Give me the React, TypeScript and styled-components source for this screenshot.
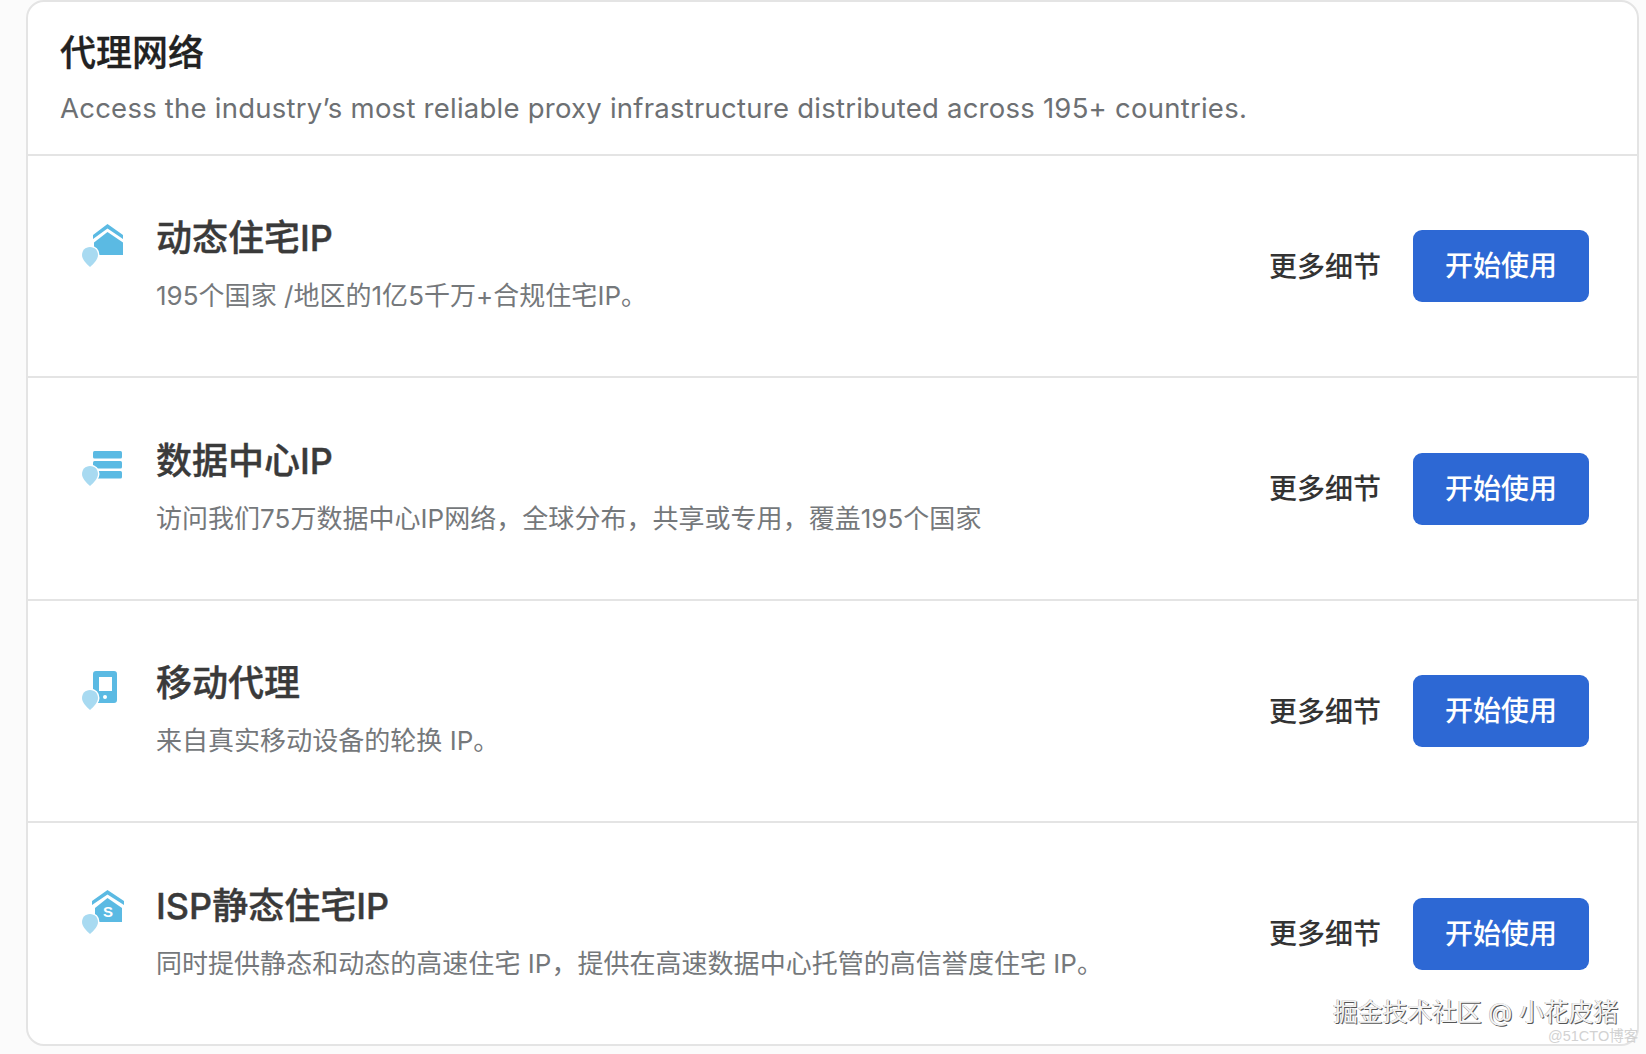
import React from "react";
import styled, { createGlobalStyle } from "styled-components";

const CJK = `Inter, "Noto Sans CJK SC", "Noto Sans", sans-serif`;

const Global = createGlobalStyle`
  html, body { margin: 0; padding: 0; background: #fbfbfb; }
  body { width: 1646px; height: 1054px; overflow: hidden; font-family: ${CJK}; }
`;

const Page = styled.div`
  position: relative;
  width: 1646px;
  height: 1054px;
  padding: 0 7px 8px 26px;
  box-sizing: border-box;
`;

const Card = styled.section`
  height: 100%;
  box-sizing: border-box;
  background: #fff;
  border: 2px solid #e4e4e4;
  border-radius: 18px;
  display: flex;
  flex-direction: column;
`;

const Header = styled.header`
  height: 154px;
  flex: none;
  box-sizing: border-box;
  padding: 26px 32px 0;
  border-bottom: 2px solid #e4e4e4;
`;

const Heading = styled.h1`
  margin: 0;
  font-size: 36px;
  line-height: 50px;
  font-weight: 500;
  color: #222;
  -webkit-text-stroke: 0.3px #222;
`;

const Lead = styled.p`
  margin: 10px 0 0;
  font-size: 27.5px;
  line-height: 40px;
  letter-spacing: 0.24px;
  color: #6d7073;
`;

const Row = styled.article<{ $h: number; $last?: boolean }>`
  height: ${(p) => p.$h}px;
  flex: none;
  box-sizing: border-box;
  display: flex;
  align-items: center;
  padding: 0 48px 0 32px;
  border-bottom: ${(p) => (p.$last ? "none" : "2px solid #e4e4e4")};
`;

const IconBox = styled.svg<{ $top: number }>`
  width: 90px;
  height: 90px;
  flex: none;
  align-self: flex-start;
  margin: ${(p) => p.$top}px 6px 0 0;
`;

const Body = styled.div`
  flex: 1;
  min-width: 0;
  margin-top: -5px;
`;

const Title = styled.h2`
  margin: 0;
  font-size: 36px;
  line-height: 50px;
  font-weight: 500;
  color: #3a3a3a;
  -webkit-text-stroke: 0.4px #3a3a3a;
`;

const Desc = styled.p`
  margin: 15px 0 0;
  font-size: 26px;
  line-height: 36px;
  letter-spacing: 0.03px;
  color: #75787b;
`;

const More = styled.span`
  font-size: 28px;
  font-weight: 500;
  color: #333;
  margin: 0 32px 3px 0;
`;

const Action = styled.button`
  width: 176px;
  height: 72px;
  border: none;
  border-radius: 9px;
  background: #2d68d4;
  color: #fff;
  font-family: ${CJK};
  font-size: 28px;
  font-weight: 500;
  padding: 0 0 4px;
`;

const Juejin = styled.div`
  position: absolute;
  left: 1333px;
  top: 994px;
  font-size: 25px;
  line-height: 36px;
  letter-spacing: -0.25px;
  white-space: nowrap;
  color: #f4f4f4;
  text-shadow: 1px 1px 0 #555, -0.5px -0.5px 0 #aaa;
`;

const Cto = styled.div`
  position: absolute;
  left: 1548px;
  top: 1027px;
  font-family: "Liberation Sans", "Noto Sans CJK SC", sans-serif;
  font-size: 14.5px;
  line-height: 18px;
  white-space: nowrap;
  color: #d2d2d2;
`;

const PinMark = styled.path`
  fill: #a8daf1;
  stroke: #fff;
  stroke-width: 3;
  paint-order: stroke;
`;

const ShopLetter = styled.text`
  fill: #fff;
  font-family: "Liberation Sans", sans-serif;
  font-size: 15px;
  font-weight: 700;
`;

const blue = "#5bbae3";

const Pin = ({ y }: { y: number }) => (
  <PinMark
    transform={`translate(30 ${y})`}
    d="M0 0c4.800 0 8 3.600 8 8 0 4.500-4.500 8.800-8 12-3.500-3.200-8-7.500-8-12C-8 3.600-4.800 0 0 0z"
  />
);

type IconProps = { top: number };

const HomeIcon = ({ top }: IconProps) => (
  <IconBox $top={top} viewBox="0 0 90 90">
    <path d="M47.500 24 63 35v4L47.500 28.500 33 39v-4z" fill={blue} />
    <path d="M47.500 32 63 42.500V55H34V42.500z" fill={blue} />
    <Pin y={47} />
  </IconBox>
);

const StackIcon = ({ top }: IconProps) => (
  <IconBox $top={top} viewBox="0 0 90 90">
    <rect x="33" y="26" width="29" height="7.500" rx="1.500" fill={blue} />
    <rect x="33" y="36" width="29" height="7.500" rx="1.500" fill={blue} />
    <rect x="33" y="46" width="29" height="7.500" rx="1.500" fill={blue} />
    <Pin y={41} />
  </IconBox>
);

const PhoneIcon = ({ top }: IconProps) => (
  <IconBox $top={top} viewBox="0 0 90 90">
    <path
      fillRule="evenodd"
      d="M36 21h18a3 3 0 0 1 3 3v26a3 3 0 0 1-3 3H36a3 3 0 0 1-3-3V24a3 3 0 0 1 3-3zM39 27v14h13V27z"
      fill={blue}
    />
    <circle cx="45" cy="47" r="2" fill="#fff" />
    <Pin y={40} />
  </IconBox>
);

const ShopIcon = ({ top }: IconProps) => (
  <IconBox $top={top} viewBox="0 0 90 90">
    <path d="M47.500 20 64 31v4L47.500 24.500 32 35v-4z" fill={blue} />
    <path d="M47.500 28 62 38v14H35V38z" fill={blue} />
    <ShopLetter x="48" y="47" textAnchor="middle">S</ShopLetter>
    <Pin y={44} />
  </IconBox>
);

const products = [
  { h: 222, top: 44, Icon: HomeIcon, title: "动态住宅IP", desc: "195个国家 /地区的1亿5千万+合规住宅IP。" },
  { h: 223, top: 47, Icon: StackIcon, title: "数据中心IP", desc: "访问我们75万数据中心IP网络，全球分布，共享或专用，覆盖195个国家" },
  { h: 222, top: 49, Icon: PhoneIcon, title: "移动代理", desc: "来自真实移动设备的轮换 IP。" },
  { h: 221, top: 47, Icon: ShopIcon, title: "ISP静态住宅IP", desc: "同时提供静态和动态的高速住宅 IP，提供在高速数据中心托管的高信誉度住宅 IP。" },
];

export default function App() {
  return (
    <Page>
      <Global />
      <Card>
        <Header>
          <Heading>代理网络</Heading>
          <Lead>Access the industry’s most reliable proxy infrastructure distributed across 195+ countries.</Lead>
        </Header>
        {products.map(({ h, top, Icon, title, desc }, i) => (
          <Row key={title} $h={h} $last={i === products.length - 1}>
            <Icon top={top} />
            <Body>
              <Title>{title}</Title>
              <Desc>{desc}</Desc>
            </Body>
            <More>更多细节</More>
            <Action>开始使用</Action>
          </Row>
        ))}
      </Card>
      <Juejin>掘金技术社区 @ 小花皮猪</Juejin>
      <Cto>@51CTO博客</Cto>
    </Page>
  );
}
